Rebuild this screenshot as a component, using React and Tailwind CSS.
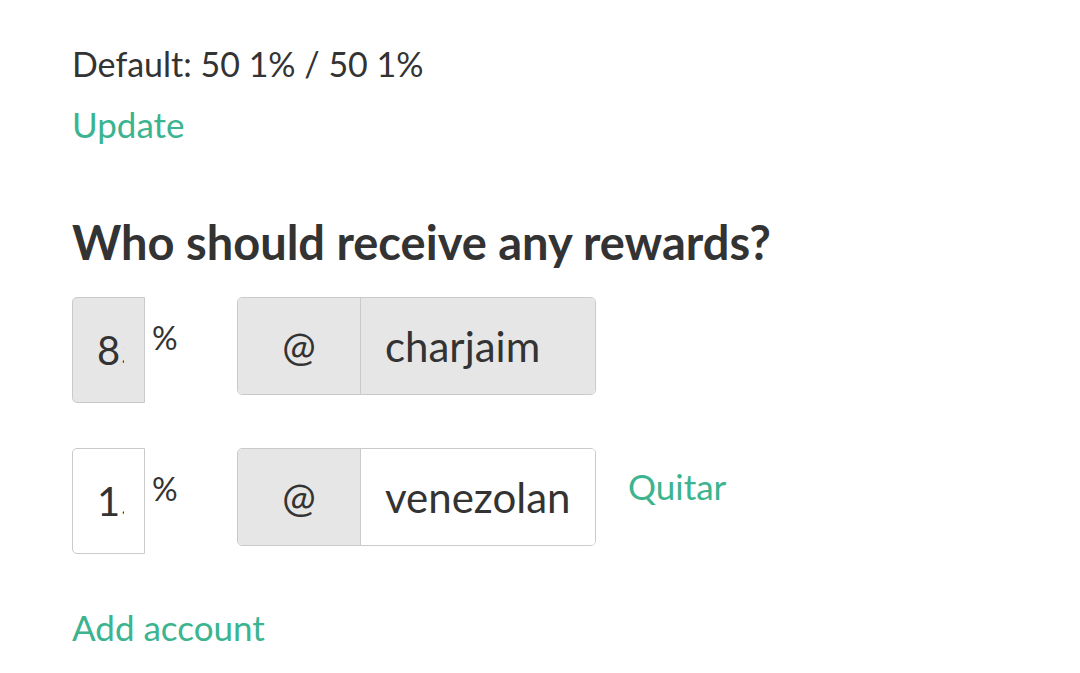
import React from 'react';

const font = { fontFamily: 'Lato, "Open Sans", sans-serif' };

function PercentRow({ percent, account, disabled, removable }) {
    return (
        <div className="flex items-start">
            {/* Percent input */}
            <input
                type="text"
                readOnly
                value={percent}
                className={`w-[73px] h-[106px] pl-[24px] pr-[20px] border border-[#cacaca] rounded-l-[5px] text-[40px] text-[#333] outline-none ${disabled ? 'bg-[#e6e6e6]' : 'bg-white'}`}
                style={font}
            />
            <span className="w-[92px] pl-[7px] mt-[21px] text-[32px] leading-[40px] text-[#333]">%</span>

            {/* Account input group */}
            <div className="flex h-[98px] w-[359px] border border-[#cacaca] rounded-[5px] overflow-hidden">
                <span className="w-[123px] shrink-0 flex items-center justify-center bg-[#e6e6e6] border-r border-[#cacaca] text-[40px] text-[#333]">
                    @
                </span>
                <input
                    type="text"
                    readOnly
                    value={account}
                    className={`min-w-0 flex-1 px-[24px] text-[42px] text-[#333] outline-none ${disabled ? 'bg-[#e6e6e6]' : 'bg-white'}`}
                    style={font}
                />
            </div>

            {removable && (
                <a className="ml-[32px] mt-[18px] text-[35px] leading-[40px] text-[#3bb48f] cursor-pointer">Quitar</a>
            )}
        </div>
    );
}

export default function App() {
    return (
        <div className="min-h-screen bg-white pl-[72px] pt-[39px]" style={font}>
            <p className="text-[34px] leading-[50px] text-[#333]">Default: 50 1% / 50 1%</p>
            <a className="block mt-[10px] text-[35px] leading-[50px] text-[#3bb48f] cursor-pointer">Update</a>

            <h3 className="mt-[63px] text-[47px] leading-[60px] font-bold text-[#333]">Who should receive any rewards?</h3>

            <div className="mt-[25px] flex flex-col gap-[45px]">
                <PercentRow percent="85" account="charjaim" disabled />
                <PercentRow percent="15" account="venezolana" removable />
            </div>

            <a className="block mt-[48px] text-[35px] leading-[50px] text-[#3bb48f] cursor-pointer">Add account</a>
        </div>
    );
}
